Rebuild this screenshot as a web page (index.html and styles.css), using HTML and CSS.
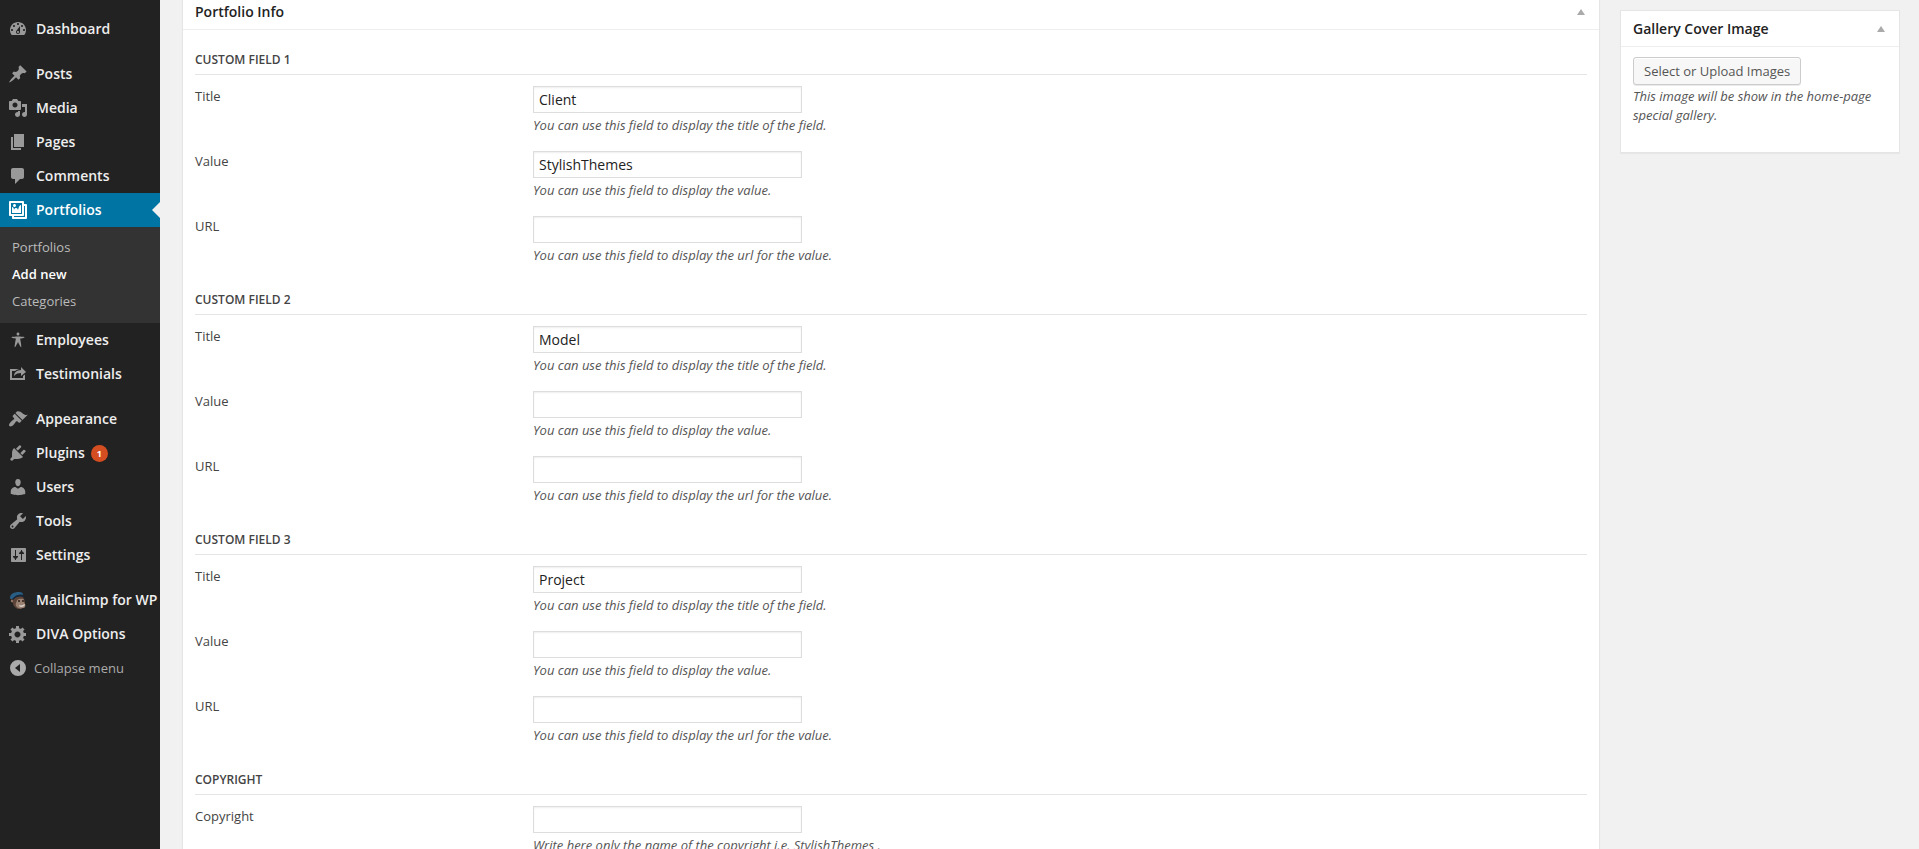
FILE: index.html
```html
<!DOCTYPE html>
<html lang="en">
<head>
  <meta charset="UTF-8" />
  <meta name="viewport" content="width=device-width, initial-scale=1" />
  <title>Add New Portfolio</title>
  <link rel="stylesheet" href="styles.css">
</head>
<body>
  <div class="admin">
    <nav class="admin-menu" aria-label="Main menu">
      <ul class="menu-group">
        <li><a class="menu-item" href="#"><svg class="icon" viewBox="0 0 20 20"><path d="M3.76 16h12.48c1.1-1.37 1.76-3.11 1.76-5 0-4.42-3.58-8-8-8s-8 3.58-8 8c0 1.89.66 3.63 1.76 5zM10 4c.55 0 1 .45 1 1s-.45 1-1 1-1-.45-1-1 .45-1 1-1zM6 6c.55 0 1 .45 1 1s-.45 1-1 1-1-.45-1-1 .45-1 1-1zm8 0c.55 0 1 .45 1 1s-.45 1-1 1-1-.45-1-1 .45-1 1-1zm-5.37 5.55L12 7v6c0 1.1-.9 2-2 2s-2-.9-2-2c0-.57.24-1.08.63-1.45zM4 10c.55 0 1 .45 1 1s-.45 1-1 1-1-.45-1-1 .45-1 1-1zm12 0c.55 0 1 .45 1 1s-.45 1-1 1-1-.45-1-1 .45-1 1-1zm-5 3c0-.55-.45-1-1-1s-1 .45-1 1 .45 1 1 1 1-.45 1-1z"/></svg>Dashboard</a></li>
      </ul>

      <ul class="menu-group">
        <li><a class="menu-item" href="#"><svg class="icon" viewBox="0 0 20 20"><path d="M10.44 3.02l1.82-1.82 6.36 6.35-1.83 1.82c-1.05-.68-2.48-.57-3.41.36l-.75.75c-.92.93-1.04 2.35-.35 3.41l-1.83 1.82-2.41-2.41-2.8 2.79c-.42.42-3.38 2.71-3.8 2.29s1.86-3.39 2.28-3.81l2.79-2.79L4.1 9.36l1.83-1.82c1.05.69 2.48.57 3.4-.36l.75-.75c.93-.92 1.05-2.35.36-3.41z"/></svg>Posts</a></li>
        <li><a class="menu-item" href="#"><svg class="icon" viewBox="0 0 20 20"><path d="M13 11V4c0-.55-.45-1-1-1h-1.67L9 1H5L3.67 3H2c-.55 0-1 .45-1 1v7c0 .55.45 1 1 1h10c.55 0 1-.45 1-1zM7 4.5c1.38 0 2.5 1.12 2.5 2.5S8.38 9.5 7 9.5 4.5 8.38 4.5 7 5.62 4.5 7 4.5zM14 6h5v10.5c0 1.38-1.12 2.5-2.5 2.5S14 17.88 14 16.5s1.12-2.5 2.5-2.5c.17 0 .34.02.5.05V9h-3V6zm-4 8.05V13h2v3.5c0 1.38-1.12 2.5-2.5 2.5S7 17.88 7 16.5 8.12 14 9.5 14c.17 0 .34.02.5.05z"/></svg>Media</a></li>
        <li><a class="menu-item" href="#"><svg class="icon" viewBox="0 0 20 20"><path d="M6 15V2h10v13H6zm-1 1h8v2H3V5h2v11z"/></svg>Pages</a></li>
        <li><a class="menu-item" href="#"><svg class="icon" viewBox="0 0 20 20"><path d="M5 2h9c1.1 0 2 .9 2 2v7c0 1.1-.9 2-2 2h-2l-5 5v-5H5c-1.1 0-2-.9-2-2V4c0-1.1.9-2 2-2z"/></svg>Comments</a></li>
        <li>
          <a class="menu-item current" href="#"><svg class="icon" viewBox="0 0 20 20"><path d="M16 4h1.960c.57 0 1.040.47 1.040 1.040v12.920c0 .57-.47 1.040-1.040 1.040H5.040C4.470 19 4 18.530 4 17.960V16H2.040C1.470 16 1 15.530 1 14.960V2.040C1 1.470 1.470 1 2.040 1h12.920c.57 0 1.040.47 1.040 1.040V4zM3 14h11V3H3v11zm5-8.500C8 4.670 7.330 4 6.500 4S5 4.670 5 5.500 5.670 7 6.500 7 8 6.330 8 5.500zm2 4.500s1-5 3-5v8H4V7c2 0 2 3 2 3s.33-2 2-2 2 2 2 2zm7 7V6h-1v8.960c0 .57-.47 1.040-1.040 1.040H6v1h11z"/></svg>Portfolios</a>
          <ul class="submenu">
            <li><a href="#">Portfolios</a></li>
            <li><a class="active" href="#">Add new</a></li>
            <li><a href="#">Categories</a></li>
          </ul>
        </li>
        <li><a class="menu-item" href="#"><svg class="icon" viewBox="0 0 20 20"><path d="M10 2.6c.83 0 1.5.67 1.5 1.5s-.67 1.51-1.5 1.51c-.82 0-1.5-.68-1.5-1.51s.68-1.5 1.5-1.5zM3.4 7.36c0-.65 6.6-.76 6.6-.76s6.6.11 6.6.76-4.47 1.4-4.47 1.4 1.69 8.14 1.06 8.38c-.62.24-3.19-5.19-3.19-5.19s-2.56 5.43-3.18 5.19c-.63-.24 1.06-8.38 1.06-8.38S3.4 8.01 3.4 7.36z"/></svg>Employees</a></li>
        <li><a class="menu-item" href="#"><svg class="icon" viewBox="0 0 20 20"><path d="M18 8l-5 4V9.01c-2.58.06-4.88.45-7 2.99.29-3.57 2.66-5.66 7-5.94V3zM4 14h11v-2l2-1.6V16H2V5h9.43c-1.83.32-3.31 1-4.41 2H4v7z"/></svg>Testimonials</a></li>
      </ul>

      <ul class="menu-group">
        <li><a class="menu-item" href="#"><svg class="icon" viewBox="0 0 20 20"><path d="M14.48 11.06L7.41 3.99l1.5-1.5c.5-.56 2.3-.47 3.51.32 1.21.8 1.43 1.28 2.91 2.1 1.18.64 2.45 1.26 4.45.85zm-.71.71L6.7 4.7 4.93 6.47c-.39.39-.39 1.02 0 1.41l1.06 1.06c.39.39.39 1.03 0 1.42-.6.6-1.43 1.11-2.21 1.69-.35.26-.7.53-1.01.84C1.43 14.23.4 16.08 1.4 17.07c.99 1 2.84-.03 4.18-1.36.31-.31.58-.66.85-1.02.57-.78 1.08-1.61 1.69-2.21.39-.39 1.02-.39 1.41 0l1.06 1.06c.39.39 1.02.39 1.41 0z"/></svg>Appearance</a></li>
        <li><a class="menu-item" href="#"><svg class="icon" viewBox="0 0 20 20"><path d="M13.11 4.36L9.87 7.6 8 5.73l3.24-3.24c.35-.34 1.05-.2 1.56.32.52.51.66 1.21.31 1.55zm-8 1.77l.91-1.12 9.01 9.01-1.19.84c-.71.71-2.63 1.16-3.82 1.16H6.14L4.9 17.26c-.59.59-1.54.59-2.12 0-.59-.58-.59-1.53 0-2.12l1.24-1.24v-3.88c0-1.13.4-3.19 1.09-3.89zm7.26 3.97l3.24-3.24c.34-.35 1.04-.21 1.55.31.52.51.66 1.21.31 1.55l-3.24 3.25z"/></svg>Plugins<span class="badge">1</span></a></li>
        <li><a class="menu-item" href="#"><svg class="icon" viewBox="0 0 20 20"><path d="M10 9.25c-2.27 0-2.73-3.44-2.73-3.44C7 4.02 7.82 2 9.97 2c2.16 0 2.98 2.02 2.71 3.81 0 0-.41 3.44-2.68 3.44zm0 2.57L12.72 10c2.39 0 4.52 2.33 4.52 4.53v2.49s-3.65 1.13-7.24 1.13c-3.65 0-7.24-1.13-7.24-1.13v-2.49c0-2.25 1.94-4.48 4.47-4.48z"/></svg>Users</a></li>
        <li><a class="menu-item" href="#"><svg class="icon" viewBox="0 0 20 20"><path d="M16.68 9.77c-1.34 1.34-3.3 1.67-4.95.99l-5.41 6.52c-.99.99-2.59.99-3.58 0s-.99-2.59 0-3.57l6.52-5.42c-.68-1.65-.35-3.61.99-4.95 1.28-1.28 3.12-1.62 4.72-1.06l-2.89 2.89 2.82 2.82 2.86-2.87c.53 1.58.18 3.39-1.08 4.65zM3.81 16.21c.4.39 1.04.39 1.43 0 .4-.4.4-1.04 0-1.43-.39-.4-1.03-.4-1.43 0-.39.39-.39 1.03 0 1.43z"/></svg>Tools</a></li>
        <li><a class="menu-item" href="#"><svg class="icon" viewBox="0 0 20 20"><path fill-rule="evenodd" d="M4 3h13c.55 0 1 .45 1 1v12c0 .55-.45 1-1 1H4c-.55 0-1-.45-1-1V4c0-.55.45-1 1-1zM7 5v6H5v1l2 2v1h1v-1l2-2v-1H8V5zM13 15V9h-2V8l2-2V5h1v1l2 2v1h-2v6z"/></svg>Settings</a></li>
      </ul>

      <ul class="menu-group">
        <li><a class="menu-item" href="#"><svg class="icon" viewBox="0 0 20 20">
          <path fill="#5b4338" d="M5 8c3-3 7-3 10-1 2 3 3 7 1 10-2 2-6 3-8 1-2-1-3-3-3-5-3 0-3-4 0-5z"/>
          <path fill="#9a8070" d="M9 10c2-1 6-2 7 0 0 2 0 3 1 4 1 2 0 4-2 4-3 1-6 0-7-2-1-3 1-4 1-6z"/>
          <circle fill="#9a8070" cx="4" cy="11" r="1"/>
          <path fill="#d8cfc8" d="M11 15c2 1 4 0 6-1 0 2-2 3-4 3-1 0-2-1-2-2z"/>
          <circle fill="#2b1d18" cx="11" cy="11" r="1"/>
          <circle fill="#2b1d18" cx="15" cy="11" r="1"/>
          <path fill="#2a5f85" d="M2 8c0-4 4-6 9-6 3 0 4 1 4 3-4-1-7 0-10 4-2 0-3 0-3-1z"/>
          <path fill="#15283a" d="M4 9c3-4 7-5 11-4l1 2c-4-1-8-1-11 3z"/>
        </svg>MailChimp for WP</a></li>
        <li><a class="menu-item" href="#"><svg class="icon" viewBox="0 0 20 20"><path d="M18 12h-2.180c-.17.7-.44 1.35-.81 1.930l1.540 1.540-2.100 2.100-1.540-1.540c-.58.36-1.230.63-1.910.79V19H8v-2.180c-.68-.16-1.330-.43-1.910-.79l-1.540 1.540-2.120-2.120 1.540-1.540c-.36-.58-.63-1.230-.79-1.910H1V9.030h2.170c.16-.7.44-1.350.8-1.940L2.430 5.550l2.100-2.100 1.540 1.540c.58-.37 1.240-.64 1.930-.81V2h3v2.180c.68.16 1.330.43 1.910.79l1.540-1.540 2.120 2.120-1.540 1.540c.36.59.64 1.240.8 1.940H18V12zm-8.500 1.500c1.660 0 3-1.340 3-3s-1.340-3-3-3-3 1.340-3 3 1.340 3 3 3z"/></svg>DIVA Options</a></li>
      </ul>

      <button class="collapse" type="button"><svg class="icon" viewBox="0 0 20 20"><path fill-rule="evenodd" d="M10 2a8 8 0 1 1 0 16 8 8 0 0 1 0-16zM12 6v8l-5-4z"/></svg>Collapse menu</button>
    </nav>

    <main class="content">
      <section class="postbox main-box">
        <header class="box-header">
          <h2>Portfolio Info</h2>
          <button class="toggle" type="button" aria-label="Toggle Portfolio Info"><svg viewBox="0 0 8 6"><path d="M4 0l4 6H0z"/></svg></button>
        </header>
        <form class="fields">
          <h3>Custom Field 1</h3>
          <div class="field">
            <label for="title1">Title</label>
            <div>
              <input type="text" id="title1" value="Client" />
              <p class="description">You can use this field to display the title of the field.</p>
            </div>
          </div>
          <div class="field">
            <label for="value1">Value</label>
            <div>
              <input type="text" id="value1" value="StylishThemes" />
              <p class="description">You can use this field to display the value.</p>
            </div>
          </div>
          <div class="field">
            <label for="url1">URL</label>
            <div>
              <input type="text" id="url1" />
              <p class="description">You can use this field to display the url for the value.</p>
            </div>
          </div>

          <h3>Custom Field 2</h3>
          <div class="field">
            <label for="title2">Title</label>
            <div>
              <input type="text" id="title2" value="Model" />
              <p class="description">You can use this field to display the title of the field.</p>
            </div>
          </div>
          <div class="field">
            <label for="value2">Value</label>
            <div>
              <input type="text" id="value2" />
              <p class="description">You can use this field to display the value.</p>
            </div>
          </div>
          <div class="field">
            <label for="url2">URL</label>
            <div>
              <input type="text" id="url2" />
              <p class="description">You can use this field to display the url for the value.</p>
            </div>
          </div>

          <h3>Custom Field 3</h3>
          <div class="field">
            <label for="title3">Title</label>
            <div>
              <input type="text" id="title3" value="Project" />
              <p class="description">You can use this field to display the title of the field.</p>
            </div>
          </div>
          <div class="field">
            <label for="value3">Value</label>
            <div>
              <input type="text" id="value3" />
              <p class="description">You can use this field to display the value.</p>
            </div>
          </div>
          <div class="field">
            <label for="url3">URL</label>
            <div>
              <input type="text" id="url3" />
              <p class="description">You can use this field to display the url for the value.</p>
            </div>
          </div>

          <h3>Copyright</h3>
          <div class="field">
            <label for="copyright">Copyright</label>
            <div>
              <input type="text" id="copyright" />
              <p class="description">Write here only the name of the copyright i.e. StylishThemes .</p>
            </div>
          </div>
        </form>
      </section>

      <aside class="postbox side-box">
        <header class="box-header">
          <h2>Gallery Cover Image</h2>
          <button class="toggle" type="button" aria-label="Toggle Gallery Cover Image"><svg viewBox="0 0 8 6"><path d="M4 0l4 6H0z"/></svg></button>
        </header>
        <div class="side-body">
          <button class="button" type="button">Select or Upload Images</button>
          <p class="description">This image will be show in the home-page special gallery.</p>
        </div>
      </aside>
    </main>
  </div>
</body>
</html>
```
FILE: styles.css
```css
:root {
  --menu-bg: #222;
  --submenu-bg: #333;
  --highlight: #0074a2;
  --page-bg: #f1f1f1;
  --border: #e5e5e5;
}
* {
  box-sizing: border-box;
}
body {
  margin: 0;
  background: var(--page-bg);
  color: #444;
  font-family: "Open Sans", sans-serif;
  font-size: 13px;
  line-height: 20px;
}
h2, h3, p, ul {
  margin: 0;
  padding: 0;
}
ul {
  list-style: none;
}
button, input {
  font-family: inherit;
}
.admin {
  display: flex;
  height: 100vh;
  overflow: hidden;
}

/* Menu */
.admin-menu {
  flex: 0 0 160px;
  padding-top: 12px;
  background: var(--menu-bg);
}
.menu-group {
  margin-bottom: 11px;
}
.menu-group:last-of-type {
  margin-bottom: 0;
}
.menu-item {
  display: flex;
  align-items: center;
  gap: 8px;
  height: 34px;
  padding-left: 8px;
  color: #eee;
  font-size: 14px;
  font-weight: 600;
  white-space: nowrap;
  text-decoration: none;
}
.icon {
  flex: none;
  width: 20px;
  height: 20px;
  fill: #999;
}
.menu-item.current {
  position: relative;
  background: var(--highlight);
  color: #fff;
}
.menu-item.current .icon {
  fill: #fff;
}
.menu-item.current::after {
  content: "";
  position: absolute;
  top: 9px;
  right: 0;
  border: 8px solid transparent;
  border-left: 0;
  border-right-color: var(--page-bg);
}
.submenu {
  padding: 7px 0 8px;
  background: var(--submenu-bg);
}
.submenu a {
  display: block;
  padding: 3px 12px 4px;
  color: #bbb;
  text-decoration: none;
}
.submenu .active {
  color: #fff;
  font-weight: 600;
}
.badge {
  width: 17px;
  height: 17px;
  margin-left: -2px;
  border-radius: 50%;
  background: #d54e21;
  color: #fff;
  font-size: 9px;
  font-weight: 700;
  line-height: 17px;
  text-align: center;
}
.collapse {
  display: flex;
  align-items: center;
  gap: 6px;
  width: 100%;
  height: 34px;
  padding: 0 0 0 8px;
  border: 0;
  background: none;
  color: #aaa;
  font-size: 13px;
}
.collapse .icon {
  fill: #aaa;
}

/* Boxes */
.content {
  flex: 1;
  display: flex;
  align-items: flex-start;
  gap: 20px;
  padding: 0 19px 0 22px;
}
.postbox {
  border: 1px solid var(--border);
  background: #fff;
  box-shadow: 0 1px 1px rgba(0,0,0,0.04);
}
.main-box {
  flex: 1;
  border-top: 0;
}
.side-box {
  flex: 0 0 280px;
  margin-top: 10px;
}
.box-header {
  display: flex;
  align-items: center;
  justify-content: space-between;
  padding: 6px 14px 5px 12px;
  border-bottom: 1px solid #eee;
}
.main-box .box-header {
  padding-top: 0;
}
.box-header h2 {
  color: #222;
  font-size: 14px;
  font-weight: 600;
  line-height: 24px;
}
.toggle {
  display: flex;
  padding: 0;
  border: 0;
  background: none;
}
.toggle svg {
  width: 8px;
  height: 6px;
  fill: #aaa;
}

/* Fields */
.fields {
  padding: 0 12px 12px;
}
.fields h3 {
  padding: 20px 0 4px;
  border-bottom: 1px solid var(--border);
  font-size: 12px;
  font-weight: 600;
  text-transform: uppercase;
}
.field {
  display: grid;
  grid-template-columns: 338px 1fr;
  padding: 11px 0 5px;
}
.field input {
  display: block;
  width: 269px;
  height: 27px;
  margin-bottom: 2px;
  padding: 3px 5px;
  border: 1px solid #ddd;
  background: #fff;
  box-shadow: inset 0 1px 2px rgba(0,0,0,0.07);
  color: #222;
  font-size: 14px;
}
.description {
  color: #555;
  font-style: italic;
}
.side-body {
  padding: 10px 12px 27px;
}
.side-body .description {
  line-height: 19px;
  margin-top: 2px;
}
.button {
  display: block;
  height: 28px;
  padding: 0 10px;
  border: 1px solid #ccc;
  border-radius: 3px;
  background: #f7f7f7;
  box-shadow: inset 0 1px 0 #fff, 0 1px 0 rgba(0,0,0,0.08);
  color: #555;
  font-size: 13px;
}
```
